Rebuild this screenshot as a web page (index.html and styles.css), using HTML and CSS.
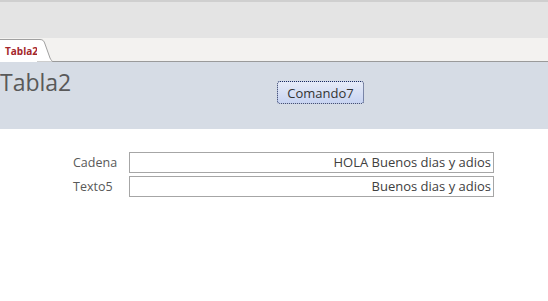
FILE: index.html
```html
<!DOCTYPE html>
<html lang="es">

<head>
    <meta charset="UTF-8">
    <title>Tabla2</title>
    <link rel="stylesheet" href="styles.css">
</head>

<body>
    <div class="topbar"></div>
    <div class="tabstrip">
        <div class="tab">
            <span class="tab_label">Tabla2</span>
            <svg class="tab_edge" width="16" height="23" viewBox="0 0 16 23">
                <path d="M0 0.5 H3 C6 0.5 7 2 8 5 L13 19 C14 21 15 22.5 16 22.5 H0 Z" fill="#fff"/>
                <path d="M0 0.5 H3 C6 0.5 7 2 8 5 L13 19 C14 21 15 22.5 16 22.5" fill="none" stroke="#a0a0a0" stroke-width="1"/>
            </svg>
        </div>
    </div>
    <div class="header">
        <div class="title">Tabla2</div>
        <button class="cmd">Comando7</button>
    </div>
    <div class="form">
        <div class="row">
            <label class="lbl">Cadena</label>
            <div class="field">HOLA Buenos dias y adios</div>
        </div>
        <div class="row">
            <label class="lbl">Texto5</label>
            <div class="field">Buenos dias y adios</div>
        </div>
    </div>
</body>

</html>
```

FILE: styles.css
```css
* {
    margin: 0px;
    padding: 0px;
    box-sizing: border-box;
}

body {
    background-color: #fff;
    font-family: "Open Sans", "Noto Sans", sans-serif;
}

.topbar {
    height: 38px;
    background-color: #e4e4e4;
    border-top: 2px solid #cfcfcf;
}

.tabstrip {
    height: 24px;
    background-color: #f3f2f0;
    border-bottom: 1px solid #9a9a9a;
    display: flex;
    align-items: flex-end;
}

.tab {
    display: flex;
    height: 23px;
    margin-bottom: -1px;
}

.tab_label {
    background-color: #fff;
    border-top: 1px solid #a0a0a0;
    padding: 4px 0 0 5px;
    width: 37px;
    font-size: 10px;
    font-weight: bold;
    color: #a4262c;
    white-space: nowrap;
}

.tab_edge {
    display: block;
}

.header {
    height: 67px;
    background-color: #d6dce5;
    display: flex;
    align-items: flex-start;
}

.title {
    width: 277px;
    padding-top: 5px;
    font-size: 23px;
    color: #595959;
    line-height: 30px;
}

.cmd {
    margin-top: 19px;
    width: 87px;
    height: 23px;
    border: 1px dotted #1f2d5a;
    border-radius: 3px;
    background: linear-gradient(#e6ebf8, #c8d4f2);
    font-family: inherit;
    font-size: 13px;
    color: #333;
}

.form {
    padding-top: 23px;
    display: flex;
    flex-direction: column;
    gap: 3px;
}

.row {
    display: grid;
    grid-template-columns: 73px 56px 365px;
    height: 21px;
    align-items: center;
}

.lbl {
    grid-column: 2;
    font-size: 12.5px;
    color: #595959;
}

.field {
    grid-column: 3;
    height: 21px;
    border: 1px solid #a6a6a6;
    text-align: right;
    padding-right: 2px;
    font-size: 13px;
    line-height: 19px;
    color: #404040;
}
```
